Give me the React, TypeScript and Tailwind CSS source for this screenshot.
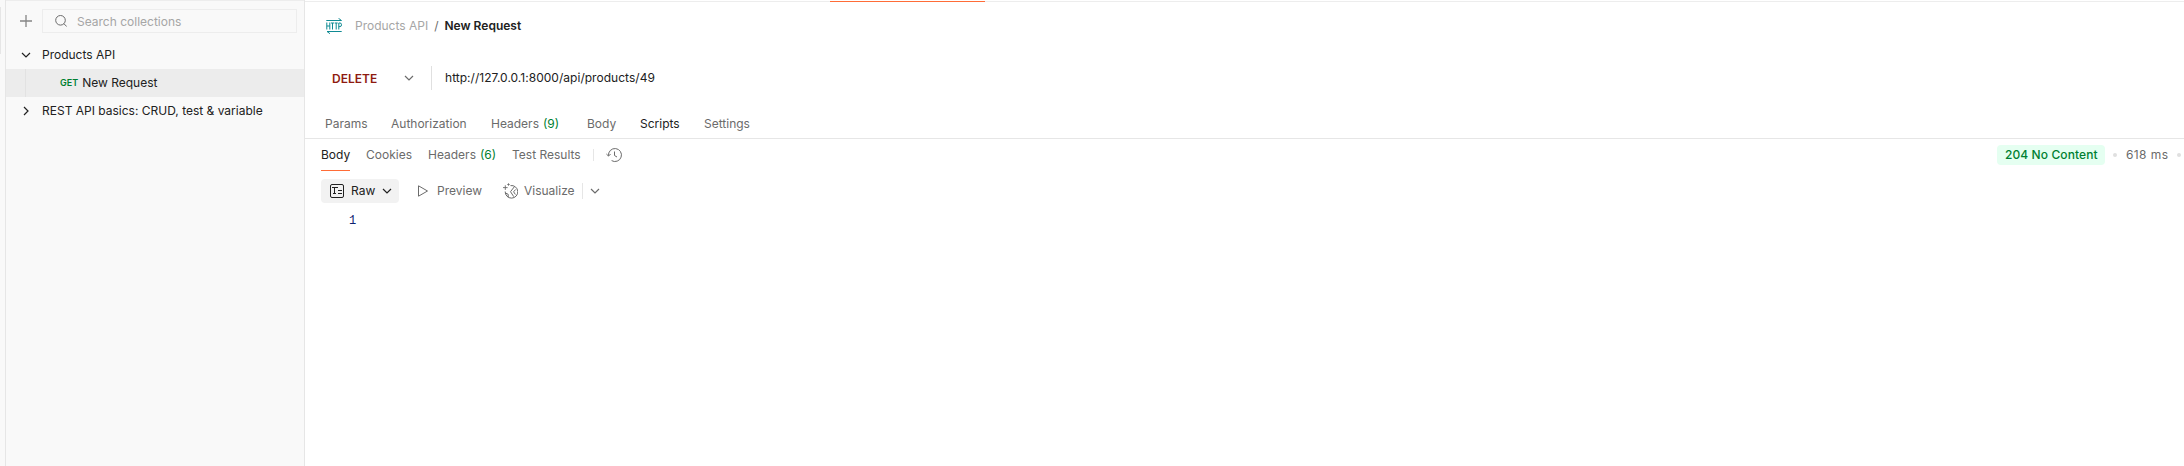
import type { ReactNode } from "react";

function Chevron({ className, right = false }: { className: string; right?: boolean }) {
  return (
    <svg className={className} width="12" height="12" viewBox="0 0 12 12" fill="none" stroke="currentColor" strokeWidth="1.2">
      <path d={right ? "M4 2l4 4-4 4" : "M2 4l4 4 4-4"} />
    </svg>
  );
}

function Tab({ className, children, count }: { className: string; children: ReactNode; count?: number }) {
  return (
    <div className={"flex shrink-0 items-center gap-1 whitespace-nowrap " + className}>
      <span>{children}</span>
      {count !== undefined && <span className="text-[#007f31]">({count})</span>}
    </div>
  );
}

function Sidebar() {
  return (
    <aside className="flex w-[305px] shrink-0 border-r border-[#e6e6e6] bg-[#f9f9f9]">
      <div className="w-[6px] shrink-0 border-r border-[#e6e6e6]">
        <div className="mt-[7px] h-[47px] w-px bg-[#e6e6e6]" />
      </div>
      <div className="min-w-0 flex-1 border-t border-[#ededed]">
        <div className="mt-2 flex h-6 items-center">
          <svg className="ml-[14px] text-[#858585]" width="12" height="12" viewBox="0 0 12 12" fill="none" stroke="currentColor" strokeWidth="1.3">
            <path d="M6 0v12M0 6h12" />
          </svg>
          <div className="ml-[10px] flex h-6 w-[255px] items-center border border-[#ededed] text-[#a6a6a6]">
            <svg className="ml-3 text-[#6b6b6b]" width="12" height="12" viewBox="0 0 12 12" fill="none" stroke="currentColor">
              <circle cx="5.5" cy="5.3" r="4.8" />
              <path d="M8.800 8.600l3 3" />
            </svg>
            <span className="ml-[10px] pt-[2px]">Search collections</span>
          </div>
        </div>
        <div className="mt-2 flex h-7 items-center">
          <Chevron className="ml-[14px]" />
          <span className="ml-[10px]">Products API</span>
        </div>
        <div className="flex h-7 items-center bg-[#ececec]">
          <div className="ml-[19px] h-7 w-px bg-[#e2e2e2]" />
          <span className="ml-[34px] text-[9px] font-semibold text-[#007f31]">GET</span>
          <span className="ml-1">New Request</span>
        </div>
        <div className="flex h-7 items-center">
          <Chevron className="ml-[14px]" right />
          <span className="ml-[10px]">REST API basics: CRUD, test &amp; variable</span>
        </div>
      </div>
    </aside>
  );
}

function Breadcrumb() {
  return (
    <div className="mt-3 flex h-6 items-center">
      <svg className="ml-[21px] text-[#0f8a93]" width="16" height="16" viewBox="0 0 16 16" fill="none" stroke="currentColor">
        <path d="M0.300 2.500H15.500M12.500 0.300L15.500 2.500M15.700 13.500H1M4 15.700L1 13.500" />
        <path d="M0.800 4.500v7M3.800 4.500v7M0.800 8h3M5 5h3M6.500 5v6.500M8.700 5h3M10.200 5v6.500M12.800 11.500V5h1.200q1.500 0 1.500 1.800t-1.500 1.800h-1.200" />
      </svg>
      <span className="ml-[13px] text-[#a6a6a6]">Products API</span>
      <span className="ml-[6px] text-[#6b6b6b]">/</span>
      <span className="ml-[6px] font-semibold">New Request</span>
    </div>
  );
}

function ResponseTabs() {
  return (
    <div className="flex h-8 items-center text-[#6b6b6b]">
      <div className="ml-4 flex h-full w-[29px] items-center border-b border-[#ff6c37] text-[#212121]">Body</div>
      <Tab className="ml-4 w-[46px]">Cookies</Tab>
      <Tab className="ml-4 w-[68px]" count={6}>Headers</Tab>
      <Tab className="ml-4 w-[69px]">Test Results</Tab>
      <div className="ml-3 h-3 w-px bg-[#e6e6e6]" />
      <svg className="ml-3" width="16" height="16" viewBox="0 0 16 16" fill="none" stroke="currentColor">
        <path d="M2.500 8.800A6.500 6.500 0 1 1 5.600 13.600M0.400 7L2.500 9.100L4.600 7M8.500 4.500V8.500l2.500 1.500" />
      </svg>
      <div className="ml-auto flex items-center">
        <div className="flex h-5 w-[108px] items-center whitespace-nowrap rounded bg-[#e5fff1] pl-2 font-medium tracking-[0.1px] text-[#007f31]">204 No Content</div>
        <div className="ml-2 size-1 rounded-full bg-[#e0e0e0]" />
        <div className="ml-[9px] w-[43px] whitespace-nowrap tracking-[0.4px]">618 ms</div>
        <div className="ml-2 mr-[3px] size-1 rounded-full bg-[#e0e0e0]" />
      </div>
    </div>
  );
}

function ViewToolbar() {
  return (
    <div className="mt-2 flex h-6 items-center text-[#6b6b6b]">
      <div className="ml-4 flex h-6 w-[78px] items-center rounded bg-[#f2f2f2] text-[#212121]">
        <svg className="ml-[9px]" width="14" height="14" viewBox="0 0 14 14" fill="none" stroke="currentColor">
          <rect x="0.500" y="0.500" width="13" height="13" rx="1.500" />
          <path d="M2 3.500h6M4.500 3.500v6M3 9.500h3M8 6.500h4M8 9.500h4" />
        </svg>
        <span className="ml-[7px]">Raw</span>
        <Chevron className="ml-[6px]" />
      </div>
      <svg className="ml-[18px]" width="12" height="12" viewBox="0 0 12 12" fill="none" stroke="currentColor" strokeLinejoin="round">
        <path d="M1.500 0.800v10.400L10.500 6z" />
      </svg>
      <span className="ml-2 w-[46px]">Preview</span>
      <svg className="ml-[19px]" width="16" height="16" viewBox="0 0 16 16" fill="none" stroke="currentColor">
        <path d="M8.500 2.600A6.300 6.300 0 1 1 3.200 8.500" />
        <path d="M12.300 3.800L8.500 8.700l3.300 5M13.600 6.500L11.600 8.800l1.800 2.700M3.500 10l2.700 1.300v2.900" />
        <path d="M3.300 2.300v4.600M1 4.600h4.600M6.500 0.300v2.400M5.300 1.500h2.400" strokeWidth="0.9" />
      </svg>
      <span className="ml-[6px] w-[50px]">Visualize</span>
      <div className="ml-2 h-4 w-px bg-[#e6e6e6]" />
      <Chevron className="ml-[6px]" />
    </div>
  );
}

export default function App() {
  return (
    <div className="flex h-[466px] w-full overflow-hidden bg-white font-['Inter',sans-serif] text-[12px] leading-4 text-[#212121]">
      <Sidebar />
      <main className="flex min-w-0 flex-1 flex-col">
        <div className="flex h-[2px] items-end">
          <div className="h-px w-[525px] bg-[#ededed]" />
          <div className="h-px w-[155px] bg-[#ff6c37]" />
          <div className="h-px flex-1 bg-[#ededed]" />
        </div>
        <Breadcrumb />
        <div className="mt-7 flex h-6 items-center">
          <span className="ml-[27px] w-[45px] pt-[2px] font-semibold text-[#8e1a10]">DELETE</span>
          <Chevron className="ml-[26px] text-[#6b6b6b]" />
          <div className="ml-4 h-6 w-px bg-[#e0e0e0]" />
          <span className="ml-[13px] tracking-[0.03px]">http://127.0.0.1:8000/api/products/49</span>
        </div>
        <div className="flex h-[49px] items-end border-b border-[#e6e6e6] pb-[6px] text-[#6b6b6b]">
          <Tab className="ml-5 w-[42px]">Params</Tab>
          <Tab className="ml-6 w-[76px]">Authorization</Tab>
          <Tab className="ml-6 w-[72px]" count={9}>Headers</Tab>
          <Tab className="ml-6 w-[29px]">Body</Tab>
          <Tab className="ml-6 w-[40px] text-[#212121]">Scripts</Tab>
          <Tab className="ml-6">Settings</Tab>
        </div>
        <ResponseTabs />
        <ViewToolbar />
        <div className="ml-[44px] mt-[10px] font-['Liberation_Mono',monospace] text-[#0b216f]">1</div>
      </main>
    </div>
  );
}
